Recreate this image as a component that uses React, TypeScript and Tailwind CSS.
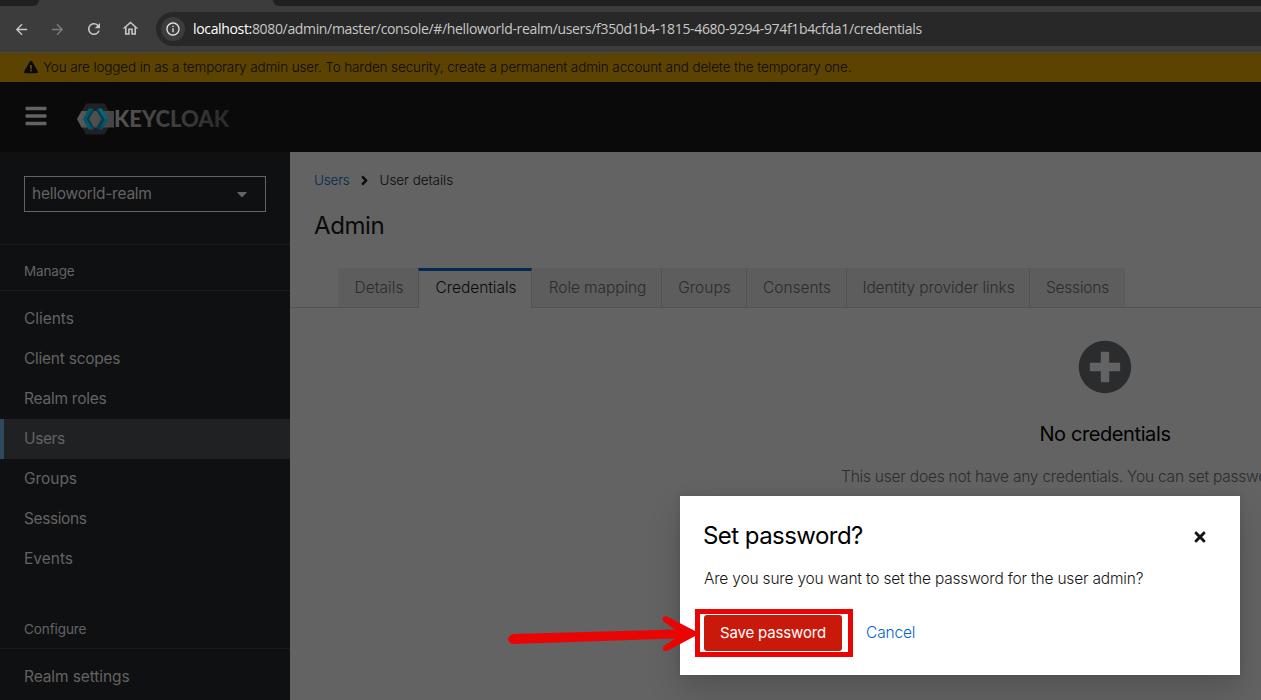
import React from "react";
import { FaBars, FaCaretDown, FaExclamationTriangle, FaPlusCircle, FaAngleRight, FaTimes } from "react-icons/fa";
import { MdArrowBack, MdArrowForward, MdRefresh, MdOutlineHome, MdInfoOutline } from "react-icons/md";

const manage = [
  { label: "Clients", cls: "tracking-[-0.05px]" },
  { label: "Client scopes", cls: "tracking-[-0.25px]" },
  { label: "Realm roles", cls: "tracking-[-0.25px]" },
  { label: "Users", cls: "tracking-[-0.4px]", current: true },
  { label: "Groups", cls: "tracking-[-0.05px]" },
  { label: "Sessions", cls: "tracking-[-0.4px]" },
  { label: "Events", cls: "" },
];

const tabs = [
  { label: "Details", w: "w-[80px]", cls: "pl-[2px] tracking-[0.05px]" },
  { label: "Credentials", w: "w-[114px]", cls: "pl-[2px] tracking-[-0.05px]", current: true },
  { label: "Role mapping", w: "w-[130px]", cls: "pl-[2px] tracking-[-0.1px]" },
  { label: "Groups", w: "w-[85px]", cls: "pl-px" },
  { label: "Consents", w: "w-[100px]", cls: "pl-px tracking-[-0.05px]" },
  { label: "Identity provider links", w: "w-[183px]", cls: "pl-px tracking-[-0.09px]" },
  { label: "Sessions", w: "w-[95px]", cls: "tracking-[-0.2px]" },
];

function BrowserBar() {
  return (
    <div className="flex h-[53px] shrink-0 flex-col border-b border-[#484848] bg-[#3c3c3c]">
      <div className="flex h-[6px] justify-between">
        <div className="h-[6px] w-[39px] rounded-br-[7px] bg-[#1f2120]" />
        <div className="h-[6px] w-[988px] rounded-bl-[7px] bg-[#1f2120]" />
      </div>
      <div className="flex h-[46px] items-center pl-[14px]">
        <div className="flex w-[142px] items-center gap-[20px] text-[#c7c7c7]">
          <MdArrowBack size={17} className="-mr-px -ml-px" />
          <MdArrowForward size={17} className="-mr-px text-[#7b7b7b]" />
          <MdRefresh size={18} className="-mr-px" />
          <MdOutlineHome size={19} className="-mt-px -ml-px" />
        </div>
        <div className="flex h-[34px] flex-1 items-center rounded-l-full bg-[#282828] pl-[5px]">
          <div className="flex size-6 items-center justify-center rounded-full bg-[#3c3c3c] text-[#e3e3e3]">
            <MdInfoOutline size={16} />
          </div>
          <div className="ml-2 pb-px font-['Open_Sans','Noto_Sans',sans-serif] text-[14px] tracking-[-0.34px] whitespace-nowrap text-[#c7c7c7]">
            <span className="text-white">localhost:</span>
            8080/admin/master/console/#/helloworld-realm/users/f350d1b4-1815-4680-9294-974f1b4cfda1/credentials
          </div>
        </div>
      </div>
    </div>
  );
}

function KeycloakLogo() {
  return (
    <svg width="154" height="34" viewBox="0 0 154 34" className="mt-[4px] ml-[29px]">
      <defs>
        <linearGradient id="word" x1="0" x2="1">
          <stop offset="0" stopColor="#555555" />
          <stop offset="1" stopColor="#292929" />
        </linearGradient>
        <linearGradient id="band" x1="0" x2="1">
          <stop offset="0" stopColor="#5a5a5a" />
          <stop offset="1" stopColor="#434343" />
        </linearGradient>
      </defs>
      <path d="M9 1.500h18.500L36.500 17l-9 15.500H9L0.500 17z" fill="#202121" />
      <path d="M4.500 9H37V25.500H4.500L0 17z" fill="url(#band)" />
      <path d="M11.500 6.500h4.500L17 8.500 12 17l5 8.500-1 2h-4.500L6 17z" fill="#06566a" />
      <path d="M16 6.500l1 2L12 17l5 8.500-1 2L9.500 17z" fill="#073d4a" />
      <path d="M20.500 6.500H25L31 17l-6 10.500h-4.500l-1-2 5-8.500-5-8.500z" fill="#073d4a" />
      <path d="M20.500 6.500H25L31 17h-3.500L21.500 8z" fill="#06647c" />
      <path d="M31 17l-6 10.500h-2L27.500 17z" fill="#06566a" />
      <text
        x="37"
        y="25"
        fill="url(#word)"
        fontFamily="Lato, sans-serif"
        fontWeight="900"
        fontSize="22"
        textLength="115"
        lengthAdjust="spacingAndGlyphs"
      >
        KEYCLOAK
      </text>
    </svg>
  );
}

function Sidebar() {
  return (
    <nav className="flex w-[290px] shrink-0 flex-col overflow-hidden bg-[#0f1011] text-[#636363]">
      <div className="flex h-[93px] shrink-0 items-start border-b border-[#191a1b] px-6 pt-6">
        <div className="flex h-9 w-[242px] items-center justify-between border border-[#636363] pr-[15px] pb-px pl-[7px]">
          <span className="text-[15.500px] tracking-[-0.25px]">helloworld-realm</span>
          <FaCaretDown size={16} />
        </div>
      </div>
      <div className="flex h-[46px] shrink-0 items-end border-b border-[#191a1b] px-6 pb-2 text-[13.500px] leading-[21px] tracking-[-0.15px]">
        Manage
      </div>
      <ul className="shrink-0 pt-2">
        {manage.map((m) => (
          <li
            key={m.label}
            className={
              "flex h-10 items-center border-l-4 pl-5 text-[15.500px] " +
              m.cls +
              (m.current ? " border-[#2e4960] bg-[#202123]" : " border-transparent")
            }
          >
            {m.label}
          </li>
        ))}
      </ul>
      <div className="flex h-[70px] shrink-0 items-end border-b border-[#191a1b] px-6 pb-2 text-[13.500px] leading-[21px] tracking-[-0.1px]">
        Configure
      </div>
      <div className="mt-2 flex h-10 shrink-0 items-center px-6 text-[15.500px] tracking-[-0.1px]">Realm settings</div>
    </nav>
  );
}

function Content() {
  return (
    <main className="flex min-w-0 flex-1 flex-col overflow-hidden bg-[#636363]">
      <div className="flex h-[57px] items-center pb-px pl-6 text-[13.500px] font-light text-[#0a0a0a]">
        <span className="tracking-[-0.2px] text-[#022950]">Users</span>
        <FaAngleRight size={15} className="mr-[8px] ml-[7px]" />
        <span className="tracking-[-0.05px]">User details</span>
      </div>
      <h1 className="h-[59px] pl-6 text-[24px] leading-[33px] tracking-[-0.4px] text-[#0a0a0a]">Admin</h1>
      <div className="flex h-10 shrink-0">
        <div className="w-12 border-b border-[#525252]" />
        {tabs.map((t, i) => (
          <div
            key={t.label}
            className={
              "flex shrink-0 items-center justify-center text-[15.500px] font-light whitespace-nowrap " +
              t.w +
              " " +
              t.cls +
              (t.current
                ? " border-x border-t-[3px] border-x-[#525252] border-t-[#022950] pb-[4px] text-[#0a0a0a]"
                : " border-b border-b-[#525252] bg-[#5d5d5d] text-[#2a2c2e]" +
                  (i > 1 && i < 6 ? " border-r border-r-[#525252]" : ""))
            }
          >
            {t.label}
          </div>
        ))}
        <div className="flex-1 border-b border-[#525252]" />
      </div>
      <section className="flex w-[1630px] flex-col items-center pt-[32px]">
        <FaPlusCircle size={54} className="text-[#2a2c2e]" />
        <h2 className="mt-[25px] text-[20px] leading-[30px] tracking-[-0.4px] text-black">No credentials</h2>
        <p className="mt-[16px] w-[528px] text-[15.500px] leading-6 font-light tracking-[-0.22px] whitespace-nowrap text-[#2a2c2e]">
          This user does not have any credentials. You can set password for this user.
        </p>
      </section>
    </main>
  );
}

function Modal() {
  return (
    <div className="absolute top-[496px] left-[680px] flex h-[179px] w-[560px] flex-col bg-white px-6 text-[#151515] shadow-[0_16px_32px_rgba(3,3,3,0.16),0_0_8px_rgba(3,3,3,0.1)]">
      <div className="mt-6 flex h-8 items-center justify-between pr-[8px]">
        <h2 className="-ml-px text-[24px] tracking-[-0.55px] text-black">Set password?</h2>
        <FaTimes size={16} className="mt-[2px]" />
      </div>
      <p className="mt-[15px] text-[15.500px] leading-6 font-light tracking-[-0.19px] whitespace-nowrap">
        Are you sure you want to set the password for the user admin?
      </p>
      <div className="mt-[24px] flex h-9 items-center">
        <button className="relative h-9 w-[138px] rounded-[3px] bg-[#c9190b] pt-px text-[15px] tracking-[-0.15px] whitespace-nowrap text-white">
          Save password
          <span className="absolute -top-[6px] -left-[9px] h-[48px] w-[158px] border-[5px] border-[#ea0505]" />
        </button>
        <button className="ml-6 pb-px text-[15.500px] font-light tracking-[-0.15px] text-[#0066cc]">Cancel</button>
      </div>
    </div>
  );
}

export default function App() {
  return (
    <div className="relative flex h-[700px] w-[1261px] flex-col overflow-hidden bg-[#0a0a0a] font-['Inter','Liberation_Sans',sans-serif]">
      <BrowserBar />
      <div className="flex h-[29px] shrink-0 items-center bg-[#5d4302] pb-px pl-6 text-[13.500px] font-light tracking-[-0.12px] whitespace-nowrap text-[#0a0a0a]">
        <FaExclamationTriangle size={14} className="mr-[5px]" />
        You are logged in as a temporary admin user. To harden security, create a permanent admin account and delete the
        temporary one.
      </div>
      <header className="flex h-[70px] shrink-0 items-center bg-[#0a0a0a] pl-6">
        <FaBars size={24} className="-mt-[3px] text-[#636363]" />
        <KeycloakLogo />
      </header>
      <div className="flex min-h-0 flex-1">
        <Sidebar />
        <Content />
      </div>
      <Modal />
      <svg width="192" height="40" viewBox="0 0 192 40" className="absolute top-[614px] left-[506px]" fill="#ea0505">
        <path d="M7 20L169 15.500L158 8C154.500 4 158 1 162 3L191 18V21L162 36.500C158 38.500 155 34.500 158 32L169 24.500L7 30C1 29 0 22 7 20Z" />
      </svg>
    </div>
  );
}
